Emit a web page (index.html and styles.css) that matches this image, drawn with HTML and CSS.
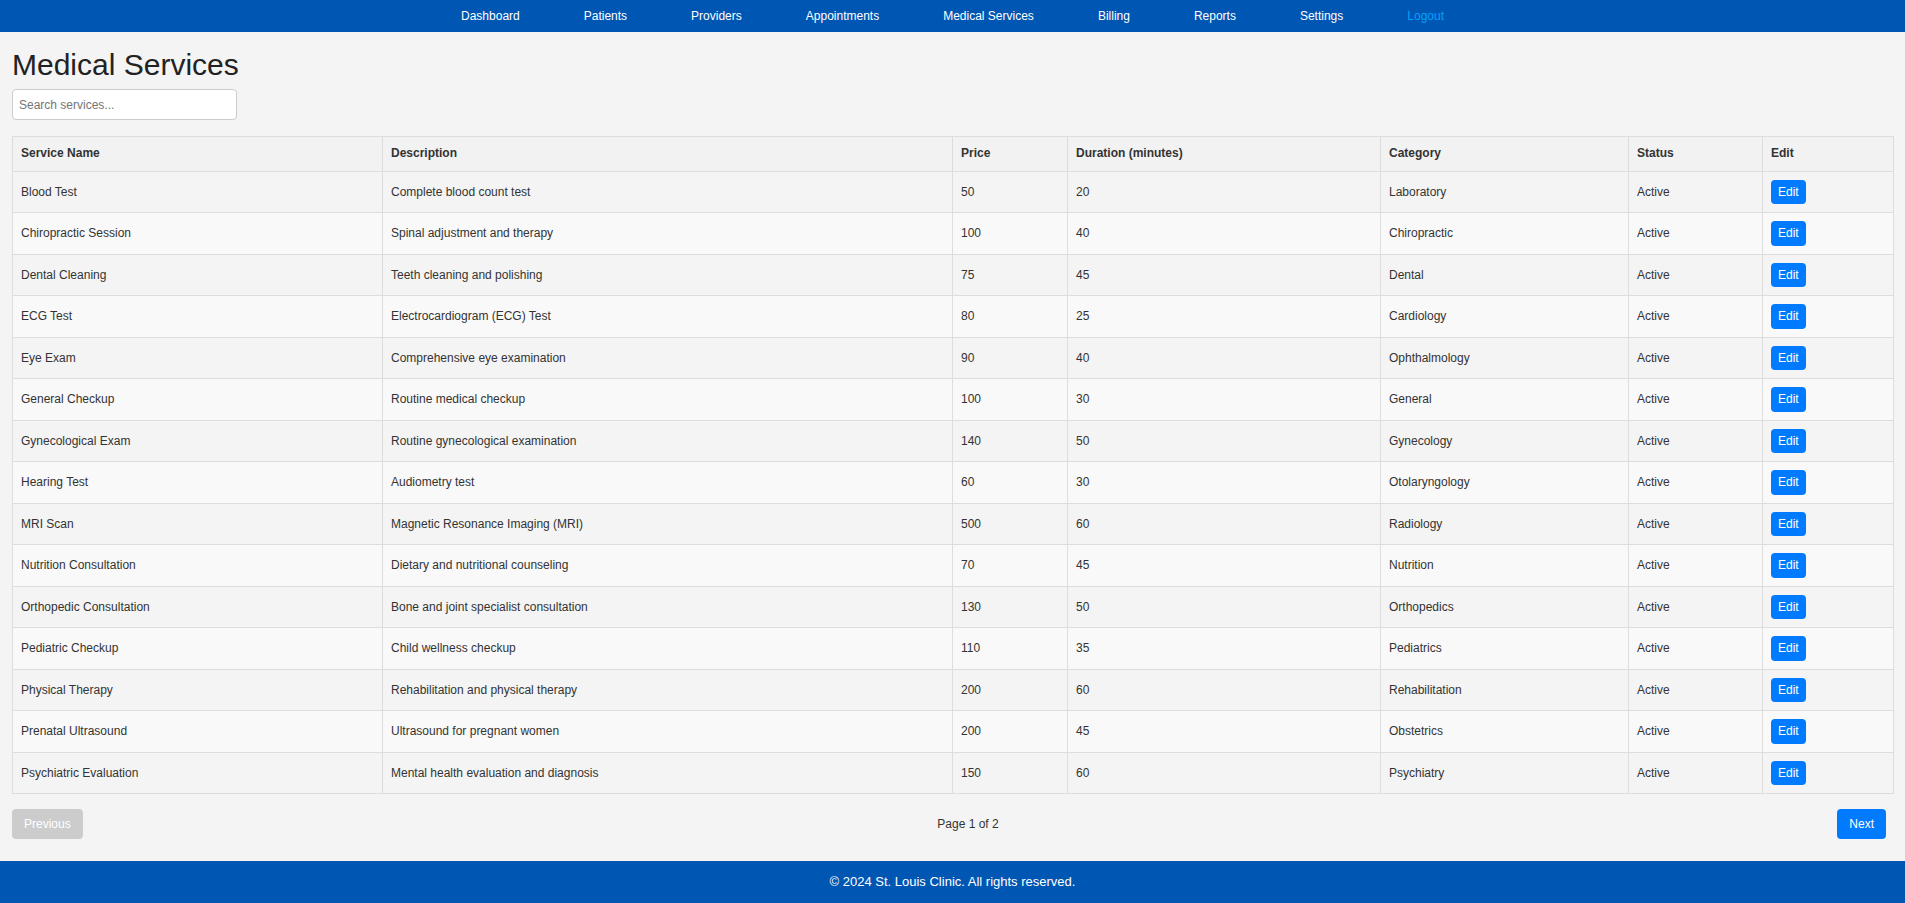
FILE: index.html
```html
<!DOCTYPE html>
<html lang="en">
<head>
<meta charset="utf-8">
<title>Medical Services</title>
<link rel="stylesheet" href="styles.css">
</head>
<body>
<nav class="topnav">
  <a href="#" class="nav-link">Dashboard</a>
  <a href="#" class="nav-link">Patients</a>
  <a href="#" class="nav-link">Providers</a>
  <a href="#" class="nav-link">Appointments</a>
  <a href="#" class="nav-link">Medical Services</a>
  <a href="#" class="nav-link">Billing</a>
  <a href="#" class="nav-link">Reports</a>
  <a href="#" class="nav-link">Settings</a>
  <a href="#" class="nav-link logout">Logout</a>
</nav>
<main class="container">
  <h1 class="page-title">Medical Services</h1>
  <input class="search" type="text" placeholder="Search services...">
  <table class="services">
    <colgroup>
      <col class="c-name"><col class="c-desc"><col class="c-price"><col class="c-dur"><col class="c-cat"><col class="c-status"><col class="c-edit">
    </colgroup>
    <thead>
      <tr><th>Service Name</th><th>Description</th><th>Price</th><th>Duration (minutes)</th><th>Category</th><th>Status</th><th>Edit</th></tr>
    </thead>
    <tbody>
      <tr><td>Blood Test</td><td>Complete blood count test</td><td>50</td><td>20</td><td>Laboratory</td><td>Active</td><td><button class="edit-btn">Edit</button></td></tr>
      <tr><td>Chiropractic Session</td><td>Spinal adjustment and therapy</td><td>100</td><td>40</td><td>Chiropractic</td><td>Active</td><td><button class="edit-btn">Edit</button></td></tr>
      <tr><td>Dental Cleaning</td><td>Teeth cleaning and polishing</td><td>75</td><td>45</td><td>Dental</td><td>Active</td><td><button class="edit-btn">Edit</button></td></tr>
      <tr><td>ECG Test</td><td>Electrocardiogram (ECG) Test</td><td>80</td><td>25</td><td>Cardiology</td><td>Active</td><td><button class="edit-btn">Edit</button></td></tr>
      <tr><td>Eye Exam</td><td>Comprehensive eye examination</td><td>90</td><td>40</td><td>Ophthalmology</td><td>Active</td><td><button class="edit-btn">Edit</button></td></tr>
      <tr><td>General Checkup</td><td>Routine medical checkup</td><td>100</td><td>30</td><td>General</td><td>Active</td><td><button class="edit-btn">Edit</button></td></tr>
      <tr><td>Gynecological Exam</td><td>Routine gynecological examination</td><td>140</td><td>50</td><td>Gynecology</td><td>Active</td><td><button class="edit-btn">Edit</button></td></tr>
      <tr><td>Hearing Test</td><td>Audiometry test</td><td>60</td><td>30</td><td>Otolaryngology</td><td>Active</td><td><button class="edit-btn">Edit</button></td></tr>
      <tr><td>MRI Scan</td><td>Magnetic Resonance Imaging (MRI)</td><td>500</td><td>60</td><td>Radiology</td><td>Active</td><td><button class="edit-btn">Edit</button></td></tr>
      <tr><td>Nutrition Consultation</td><td>Dietary and nutritional counseling</td><td>70</td><td>45</td><td>Nutrition</td><td>Active</td><td><button class="edit-btn">Edit</button></td></tr>
      <tr><td>Orthopedic Consultation</td><td>Bone and joint specialist consultation</td><td>130</td><td>50</td><td>Orthopedics</td><td>Active</td><td><button class="edit-btn">Edit</button></td></tr>
      <tr><td>Pediatric Checkup</td><td>Child wellness checkup</td><td>110</td><td>35</td><td>Pediatrics</td><td>Active</td><td><button class="edit-btn">Edit</button></td></tr>
      <tr><td>Physical Therapy</td><td>Rehabilitation and physical therapy</td><td>200</td><td>60</td><td>Rehabilitation</td><td>Active</td><td><button class="edit-btn">Edit</button></td></tr>
      <tr><td>Prenatal Ultrasound</td><td>Ultrasound for pregnant women</td><td>200</td><td>45</td><td>Obstetrics</td><td>Active</td><td><button class="edit-btn">Edit</button></td></tr>
      <tr><td>Psychiatric Evaluation</td><td>Mental health evaluation and diagnosis</td><td>150</td><td>60</td><td>Psychiatry</td><td>Active</td><td><button class="edit-btn">Edit</button></td></tr>
    </tbody>
  </table>
  <div class="pagination">
    <button class="page-btn disabled" disabled>Previous</button>
    <span class="page-info">Page 1 of 2</span>
    <button class="page-btn next">Next</button>
  </div>
</main>
<footer class="footer">© 2024 St. Louis Clinic. All rights reserved.</footer>
</body>
</html>
```

FILE: styles.css
```css
* { box-sizing: border-box; }

html, body {
  margin: 0;
  padding: 0;
}

body {
  font-family: "Liberation Sans", Arial, sans-serif;
  font-size: 12px;
  color: #333;
  background: #f4f4f4;
  min-height: 100vh;
  display: flex;
  flex-direction: column;
}

.topnav {
  background: #0056b3;
  height: 32px;
  display: flex;
  justify-content: center;
  align-items: center;
  gap: 64px;
}

.nav-link {
  color: #fff;
  text-decoration: none;
  font-size: 12px;
}

.nav-link.logout {
  color: #00a2ff;
}

.container {
  flex: 1;
  padding: 16px 12px 0;
}

.page-title {
  margin: 0 0 7px;
  font-size: 30px;
  font-weight: normal;
  line-height: normal;
  color: #222;
}

.search {
  display: block;
  width: 225px;
  height: 31px;
  padding: 0 6px;
  border: 1px solid #ccc;
  border-radius: 4px;
  background: #fff;
  font-family: "Liberation Sans", Arial, sans-serif;
  font-size: 12px;
  margin: 0 0 16px;
}

.search::placeholder {
  color: #757575;
}

.services {
  width: 100%;
  table-layout: fixed;
  border-collapse: collapse;
}

.c-name { width: 370px; }
.c-desc { width: 570px; }
.c-price { width: 115px; }
.c-dur { width: 313px; }
.c-cat { width: 248px; }
.c-status { width: 134px; }
.c-edit { width: 131px; }

.services th,
.services td {
  border: 1px solid #ddd;
  text-align: left;
  vertical-align: middle;
}

.services th {
  background: #f2f2f2;
  font-weight: bold;
  padding: 10px 8px;
  line-height: 13.7px;
}

.services td {
  padding: 8px;
  line-height: 14px;
  height: 41.47px;
}

.services tbody tr:nth-child(even) {
  background: #f9f9f9;
}

.edit-btn {
  display: inline-block;
  background: #007bff;
  color: #fff;
  border: 0;
  border-radius: 4px;
  font-family: "Liberation Sans", Arial, sans-serif;
  font-size: 12px;
  line-height: 14.5px;
  padding: 5px 7px;
  vertical-align: middle;
}

.pagination {
  display: flex;
  justify-content: space-between;
  align-items: center;
  margin-top: 15px;
  padding-right: 7px;
}

.page-btn {
  font-family: "Liberation Sans", Arial, sans-serif;
  font-size: 12px;
  line-height: 14px;
  padding: 8px 12px;
  border: 0;
  border-radius: 4px;
  color: #fff;
  background: #007bff;
}

.page-btn.disabled {
  background: #ccc;
}

.page-info {
  font-size: 12px;
  padding-left: 16px;
}

.footer {
  background: #0056b3;
  color: #fff;
  text-align: center;
  font-size: 13px;
  height: 42px;
  line-height: 42px;
  margin-top: 22px;
}
```
